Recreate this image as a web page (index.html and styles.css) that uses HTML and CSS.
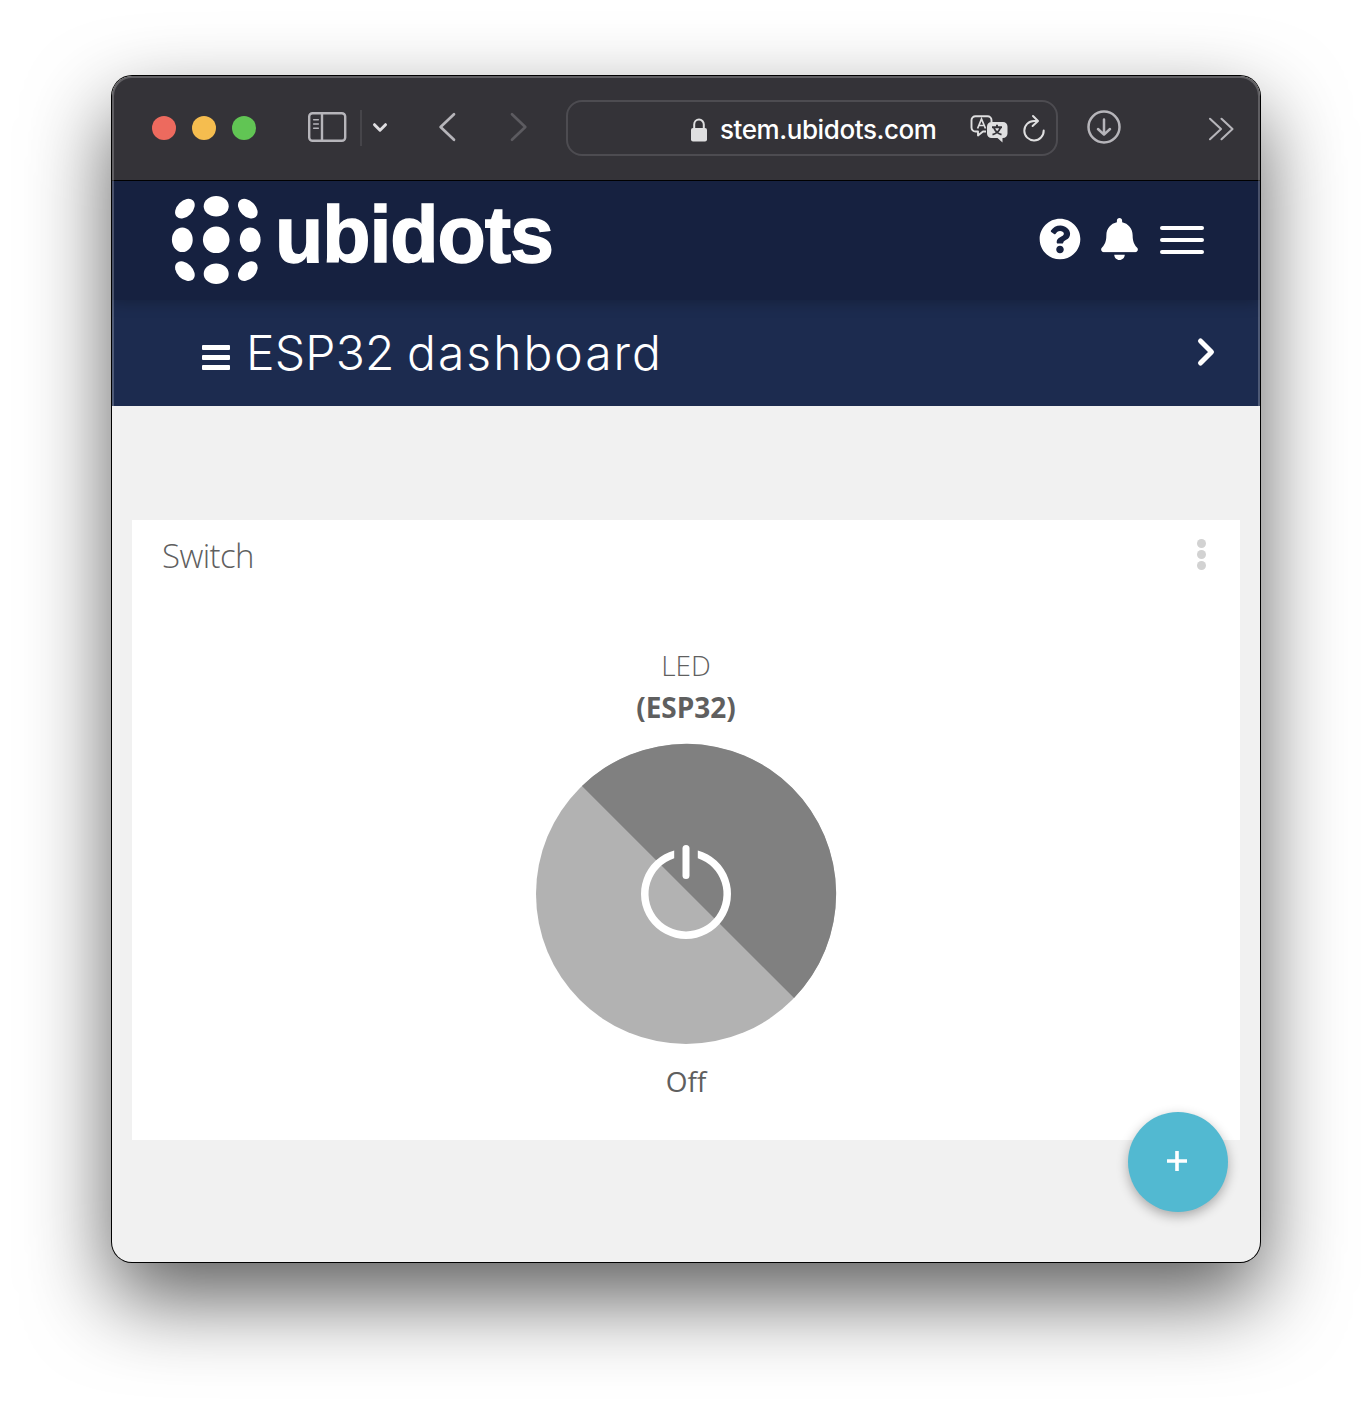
FILE: index.html
```html
<!DOCTYPE html>
<html lang="en">
<head>
<meta charset="utf-8">
<title>Ubidots</title>
<link rel="stylesheet" href="styles.css">
</head>
<body>
<main class="window">
  <div class="toolbar">
    <div class="lights"><span class="light red"></span><span class="light yellow"></span><span class="light green"></span></div>
    <svg class="sidebar-icon" width="40" height="32" viewBox="0 0 40 32" fill="none" stroke="#b6b5ba" stroke-width="2.4" stroke-linecap="round"><rect x="2.2" y="2.2" width="36" height="27.6" rx="3.4"/><path d="M15 2.5v27"/><path stroke-width="1.6" d="M6.7 8.7h4.6M6.7 13h4.6M6.7 17.3h4.6"/></svg>
    <span class="divider"></span>
    <svg class="menu-arrow" width="16" height="12" viewBox="0 0 16 12" fill="none" stroke="#dfdee1" stroke-width="3" stroke-linecap="round" stroke-linejoin="round"><path d="M2.5 2.7 8 8.2l5.5-5.5"/></svg>
    <svg class="back" width="20" height="32" viewBox="0 0 20 32" fill="none" stroke="#b6b5ba" stroke-width="2.7" stroke-linecap="round" stroke-linejoin="round"><path d="M16 3.2 2.6 16 16 28.8"/></svg>
    <svg class="forward" width="20" height="32" viewBox="0 0 20 32" fill="none" stroke="#5c5b60" stroke-width="2.7" stroke-linecap="round" stroke-linejoin="round"><path d="M3 3.2 16.3 16 3 28.8"/></svg>
    <div class="address">
      <svg class="lock" width="16" height="24" viewBox="0 0 16 24"><rect y="10" width="16" height="13.5" rx="2" fill="#dfdfe0"/><path d="M3.2 11V6.5a4.8 5 0 0 1 9.6 0V11" fill="none" stroke="#dfdfe0" stroke-width="2"/></svg>
      <span class="host">stem.ubidots.com</span>
      <svg class="translate" width="38" height="28" viewBox="0 0 38 28"><path d="M16 16.5h-3l-5 4v-4H5.5a4 4 0 0 1-4-4V5.2a4 4 0 0 1 4-4h12a4 4 0 0 1 4 4V7" fill="none" stroke="#dfdfe0" stroke-width="1.9" stroke-linejoin="round"/><path d="M7.6 13.5 11.5 4l4 9.5M9 10.5h5" fill="none" stroke="#dfdfe0" stroke-width="1.7"/><path d="M21.5 7H33a4.5 4.5 0 0 1 4.5 4.5v7A4.5 4.5 0 0 1 33 23h-.5v4.5L27.500 23h-6a4.5 4.5 0 0 1-4.5-4.5v-7A4.5 4.5 0 0 1 21.5 7z" fill="#dfdfe0"/><path d="M22 12.3h10M27 9.8v2.5M24 13q2 5 7.5 6.7M30.3 13q-2 5-7.8 6.700" fill="none" stroke="#343338" stroke-width="1.9"/></svg>
      <svg class="reload" width="24" height="28" viewBox="0 0 24 28" fill="none" stroke="#dfdfe0" stroke-width="2" stroke-linecap="round" stroke-linejoin="round"><path d="M15 7H12A9.7 9.7 0 1 0 21.7 16.5M11 2l5 5-5.4 5"/></svg>
    </div>
    <svg class="download" width="34" height="34" viewBox="0 0 34 34" fill="none" stroke="#b6b5ba" stroke-width="2.5" stroke-linecap="round" stroke-linejoin="round"><circle cx="17" cy="17" r="15.5"/><path d="M17 9.5v15M11 19l6 5.7 6-5.7"/></svg>
    <svg class="more" width="26" height="24" viewBox="0 0 26 24" fill="none" stroke="#b6b5ba" stroke-width="2.1" stroke-linecap="round" stroke-linejoin="round"><path d="M2 1.8 13 12 2 22.2M13.5 1.8 24.5 12 13.5 22.2"/></svg>
  </div>
  <header class="brand-bar">
    <svg class="logo" width="396" height="92" viewBox="0 0 396 92" fill="#fff">
      <circle cx="46.2" cy="45.8" r="13.3"/>
      <ellipse cx="46.2" cy="12.2" rx="12.5" ry="10.3"/><ellipse cx="46.2" cy="79.7" rx="12.5" ry="10.3"/>
      <ellipse cx="12.3" cy="45.8" rx="10.4" ry="12.3"/><ellipse cx="80.2" cy="45.8" rx="10.4" ry="12.3"/>
      <g><ellipse cx="14.9" cy="14.7" rx="11.5" ry="7.8" transform="rotate(-45 14.9 14.7)"/><ellipse cx="77.8" cy="14.7" rx="11.5" ry="7.8" transform="rotate(45 77.8 14.7)"/><ellipse cx="14.9" cy="77.2" rx="11.5" ry="7.8" transform="rotate(45 14.9 77.2)"/><ellipse cx="77.8" cy="77.2" rx="11.5" ry="7.8" transform="rotate(-45 77.8 77.2)"/></g>
      <text class="wordmark" x="105" y="67.5" textLength="279" lengthAdjust="spacing">ubidots</text>
    </svg>
    <div class="actions">
      <svg width="42" height="42" viewBox="0 0 512 512" fill="#fff"><path d="M504 256c0 137-111 248-248 248S8 393 8 256 119 8 256 8s248 111 248 248zM262.700 90c-54.500 0-89.300 23-116.500 63.800-3.500 5.300-2.400 12.400 2.700 16.300l34.700 26.300c5.200 3.900 12.600 3 16.700-2.100 17.900-22.700 30.100-35.800 57.300-35.800 20.400 0 45.700 13.100 45.700 33 0 15-12.400 22.700-32.500 34C247.100 238.500 216 254.900 216 296v4c0 6.600 5.400 12 12 12h56c6.600 0 12-5.400 12-12v-1.300c0-28.500 83.200-29.600 83.200-106.700 0-58-60.200-102-116.500-102zM256 338c-25.400 0-46 20.600-46 46s20.600 46 46 46 46-20.600 46-46-20.600-46-46-46z"/></svg>
      <svg width="37" height="42" viewBox="0 0 448 512" fill="#fff"><path d="M224 512c35.300 0 64-28.700 64-64H160c0 35.300 28.600 64 64 64zm215.400-149.700c-19.300-20.800-55.500-52-55.500-154.300 0-77.700-54.500-139.900-127.900-155.200V32c0-17.700-14.300-32-32-32s-32 14.300-32 32v20.800C118.600 68.100 64.100 130.300 64.100 208c0 102.300-36.200 133.500-55.500 154.300-6 6.500-8.700 14.200-8.600 21.700.1 16.400 13 32 32.100 32h383.800c19.100 0 32-15.600 32.100-32 0-7.500-2.600-15.300-8.600-21.700z"/><path d="M20 430h408" stroke="#162140" stroke-width="20"/></svg>
      <span class="burger"><i></i><i></i><i></i></span>
    </div>
  </header>
  <nav class="title-bar">
    <span class="list-icon"><i></i><i></i><i></i></span>
    <h1><span class="code">ESP32</span> dashboard</h1>
    <svg class="next" width="20" height="32" viewBox="0 0 20 32" fill="none" stroke="#fff" stroke-width="5" stroke-linecap="round" stroke-linejoin="round"><path d="M4.5 5 15.5 16 4.5 27"/></svg>
  </nav>
  <section class="canvas">
    <article class="widget">
      <div class="widget-head"><h2>Switch</h2><span class="dots"><i></i><i></i><i></i></span></div>
      <div class="switch">
        <p class="variable">LED</p>
        <p class="device">(ESP32)</p>
        <svg class="power" width="300" height="300" viewBox="0 0 300 300"><circle cx="150" cy="150" r="150" fill="#b2b2b2"/><path d="M45.950 41.950A150 150 0 0 1 258.050 254.050z" fill="#808080"/><path d="M138 105.800v8A38 38 0 1 0 162 113.800v-8A45 45 0 1 1 138 105.800z" fill="none"/><path d="M138.200 106.500A45 45 0 1 0 161.800 106.500V114.300A37.500 37.500 0 1 1 138.200 114.300z" fill="#fff"/><path d="M150 104.500v27" stroke="#fff" stroke-width="7" stroke-linecap="round"/></svg>
        <p class="state">Off</p>
      </div>
    </article>
  </section>
  <button class="add" aria-label="Add"><svg width="20" height="20" viewBox="0 0 20 20" stroke="#fff" stroke-width="3.6"><path d="M10 0v20M0 10h20"/></svg></button>
</main>
</body>
</html>
```
FILE: styles.css
```css
*, *::after { box-sizing: border-box; }
body { margin: 0; background: #fff; font-family: "Open Sans", sans-serif; color: #5f5f5f; height: 1410px; overflow: hidden; }
h1, h2, p { margin: 0; }
svg { display: block; flex: none; overflow: visible; }
.window { position: relative; width: 1148px; height: 1186px; margin: 76px 0 0 112px; border-radius: 20px; background: #f1f1f1; box-shadow: 0 0 0 1px #000, 0 36px 84px rgba(0,0,0,.64); }
.window::after { content: ""; position: absolute; top: 0; left: 0; width: 100%; height: 330px; border: 2px solid rgba(255,255,255,.22); border-bottom: 0; border-radius: 20px 20px 0 0; pointer-events: none; }
.toolbar { height: 105px; display: flex; align-items: center; padding: 0 26.5px 0 40px; background: #343338; border-bottom: 1px solid #000; border-radius: 20px 20px 0 0; }
.lights { display: flex; gap: 16px; }
.light { width: 24px; height: 24px; border-radius: 50%; }
.red { background: #ed6a5e; }
.yellow { background: #f5bd4f; }
.green { background: #61c554; }
.sidebar-icon { margin: -2px 0 0 51px; }
.divider { width: 2px; height: 36px; margin-left: 13px; background: #46454a; }
.menu-arrow { margin-left: 10px; }
.back { margin: -2px 0 0 50px; }
.forward { margin: -2px 0 0 51px; }
.address { width: 492px; height: 56px; margin-left: 37px; display: flex; align-items: center; padding-left: 123px; border: 2px solid #4d4c51; border-radius: 16px; }
.lock { margin-top: 3px; }
.host { width: 217px; margin: 3px 0 0 13px; font: 500 26px/32px Inter, sans-serif; letter-spacing: -.42px; color: #fff; white-space: nowrap; }
.translate { margin: 1px 0 0 33px; }
.reload { margin-left: 13.5px; }
.download { margin: -2px 0 0 28.5px; }
.more { margin: 1px 0 0 auto; }
.brand-bar { position: relative; height: 119px; display: flex; justify-content: space-between; padding: 13px 56px 0 58px; background: #162140; box-shadow: 0 2px 14px rgba(0,0,0,.25); clip-path: inset(0 0 -24px); }
.wordmark { font: bold 79px "Liberation Sans", sans-serif; stroke: #fff; stroke-width: 1.4px; }
.actions { height: 90px; display: flex; align-items: center; gap: 20px; }
.burger { display: flex; flex-direction: column; gap: 8px; margin: 2px 0 0 2px; }
.burger i { width: 44px; height: 4px; border-radius: 2px; background: #fff; }
.title-bar { height: 106px; display: flex; align-items: center; padding: 0 44px 0 90px; background: #1c2b4f; color: #fff; }
.list-icon { display: flex; flex-direction: column; gap: 5px; margin-top: 9px; }
.list-icon i { width: 28px; height: 5px; background: #fff; border-radius: 1px; }
h1 { margin-left: 16px; font: 300 48px/60px Inter, sans-serif; letter-spacing: 2px; word-spacing: -3px; white-space: nowrap; }
.code { letter-spacing: .2px; }
.next { margin: -2px 0 0 auto; }
.canvas { padding: 114px 20px 0; }
.widget { height: 620px; padding: 15px 30px 0; background: #fff; }
.widget-head { display: flex; justify-content: space-between; padding-right: 4px; }
h2 { font-weight: 300; font-size: 33px; line-height: 41px; letter-spacing: -.6px; }
.dots { display: flex; flex-direction: column; gap: 2px; padding-top: 3.5px; }
.dots i { width: 9px; height: 9px; border-radius: 50%; background: #d2d2d2; }
.switch { display: flex; flex-direction: column; align-items: center; padding-top: 68px; font-size: 28px; line-height: 42px; }
.variable { font-weight: 300; }
.device { font-weight: 700; }
.power { margin: 16px 0 16px; }
.add { position: absolute; left: 1016px; top: 1036px; width: 100px; height: 100px; display: grid; place-items: center; padding: 0 2px 3px 0; border: 0; border-radius: 50%; background: #52b9d1; box-shadow: 0 4px 12px rgba(0,0,0,.3); }
```
